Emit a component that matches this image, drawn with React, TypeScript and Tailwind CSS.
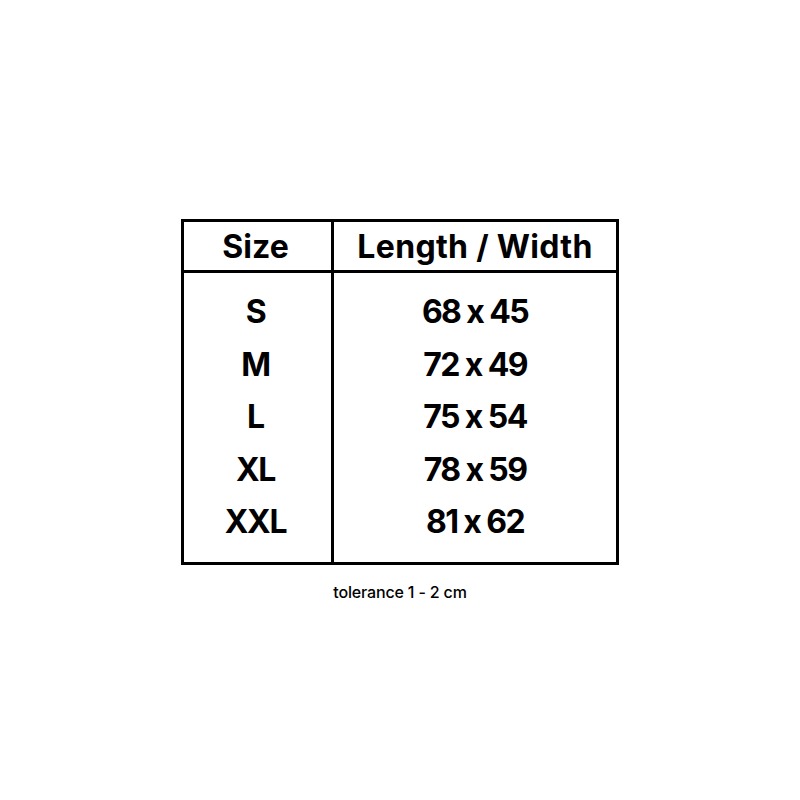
const rows = [
  { size: "S", dims: "68 x 45" },
  { size: "M", dims: "72 x 49" },
  { size: "L", dims: "75 x 54" },
  { size: "XL", dims: "78 x 59" },
  { size: "XXL", dims: "81 x 62" },
];

export default function App() {
  return (
    <div className="flex h-[800px] w-[800px] flex-col items-center bg-white pt-[219px] font-['Inter',sans-serif] text-black">
      <div className="w-[438px] border-[3px] border-black">
        <div className="flex h-[51px] border-b-[3px] border-black">
          <div className="flex w-[150px] items-center justify-center border-r-[3px] border-black pt-[1px] pr-[4px] text-[32px] font-bold tracking-[0em]">
            Size
          </div>
          <div className="flex flex-1 items-center justify-center pt-[1px] text-[32px] font-bold tracking-[0.01em]">
            Length / Width
          </div>
        </div>
        <div className="flex">
          <div className="flex w-[150px] flex-col border-r-[3px] border-black pt-[13px] pb-[13px] pr-[4px]">
            {rows.map((r) => (
              <div
                key={r.size}
                className="flex h-[52.5px] items-center justify-center text-[32px] font-bold tracking-[-0.04em]"
              >
                {r.size}
              </div>
            ))}
          </div>
          <div className="flex flex-1 flex-col pt-[13px] pb-[13px]">
            {rows.map((r) => (
              <div
                key={r.size}
                className="flex h-[52.5px] items-center justify-center text-[32px] font-bold tracking-[-0.05em]"
              >
                {r.dims}
              </div>
            ))}
          </div>
        </div>
      </div>
      <p className="mt-[15px] text-[16px] font-medium tracking-[-0.01em]">tolerance 1 - 2 cm</p>
    </div>
  );
}
